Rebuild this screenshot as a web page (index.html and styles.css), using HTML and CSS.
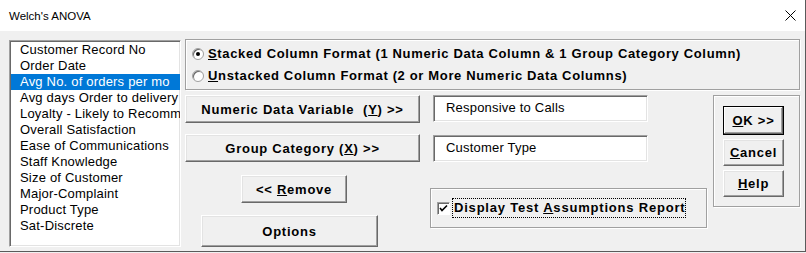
FILE: index.html
```html
<!DOCTYPE html>
<html lang="en">
<head>
    <meta charset="UTF-8">
    <title>Welch's ANOVA</title>
    <link rel="stylesheet" href="styles.css">
</head>
<body>
    <div class="window">
        <div class="titlebar">
            <span class="title">Welch's ANOVA</span>
            <svg class="close" width="11" height="11" viewBox="0 0 11 11">
                <path d="M0.5 0.5 L10.5 10.5 M10.5 0.5 L0.5 10.5" stroke="#000" stroke-width="1" fill="none"/>
            </svg>
        </div>

        <div class="client">
            <ul class="listbox">
                <li>Customer Record No</li>
                <li>Order Date</li>
                <li class="selected">Avg No. of orders per mo</li>
                <li>Avg days Order to delivery</li>
                <li>Loyalty - Likely to Recommend</li>
                <li>Overall Satisfaction</li>
                <li>Ease of Communications</li>
                <li>Staff Knowledge</li>
                <li>Size of Customer</li>
                <li>Major-Complaint</li>
                <li>Product Type</li>
                <li>Sat-Discrete</li>
            </ul>

            <div class="panel">
                <div class="frame format-frame">
                    <label class="radio-row">
                        <span class="radio checked"></span>
                        <span><u>S</u>tacked Column Format (1 Numeric Data Column &amp; 1 Group Category Column)</span>
                    </label>
                    <label class="radio-row">
                        <span class="radio"></span>
                        <span><u>U</u>nstacked Column Format (2 or More Numeric Data Columns)</span>
                    </label>
                </div>

                <div class="lower">
                    <div class="col-buttons">
                        <button class="btn btn-numeric">Numeric Data Variable&nbsp; (<u>Y</u>) &gt;&gt;</button>
                        <button class="btn btn-group">Group Category (<u>X</u>) &gt;&gt;</button>
                        <button class="btn btn-remove">&lt;&lt; <u>R</u>emove</button>
                        <button class="btn btn-options">Options</button>
                    </div>

                    <div class="col-fields">
                        <div class="textbox">Responsive to Calls</div>
                        <div class="textbox textbox-second">Customer Type</div>
                        <div class="frame check-frame">
                            <span class="checkbox">
                                <svg width="9" height="9" viewBox="0 0 9 9">
                                    <path d="M1 4 L3 6.5 L8 1.5" stroke="#000" stroke-width="1.6" fill="none"/>
                                </svg>
                            </span>
                            <span class="check-label">Display Test <u>A</u>ssumptions Report</span>
                        </div>
                    </div>

                    <div class="frame action-frame">
                        <button class="btn btn-action btn-default"><u>O</u>K &gt;&gt;</button>
                        <button class="btn btn-action"><u>C</u>ancel</button>
                        <button class="btn btn-action"><u>H</u>elp</button>
                    </div>
                </div>
            </div>
        </div>
    </div>
</body>
</html>
```

FILE: styles.css
```css
* {
    box-sizing: border-box;
}

body {
    margin: 0;
    background-color: #f0f0f0;
    font-family: 'Liberation Sans', Arial, sans-serif;
    font-size: 13px;
    color: #000;
}

.window {
    width: 806px;
    height: 252px;
    display: flex;
    flex-direction: column;
    border-right: 1px solid #5a5a5a;
    border-bottom: 1px solid #5a5a5a;
}

.titlebar {
    height: 31px;
    background: #fff;
    display: flex;
    align-items: center;
    justify-content: space-between;
    padding: 0 9px 0 9px;
}

.title {
    font-size: 11.5px;
    color: #000;
}

.client {
    flex: 1;
    display: flex;
    gap: 4px;
    padding: 8px 0 0 9px;
    background: #f0f0f0;
}

.listbox {
    list-style: none;
    margin: 1px 0 0 0;
    padding: 1px 0 0 1px;
    width: 172px;
    height: 207px;
    background: #fff;
    border: 1px solid;
    border-color: #a0a0a0 #fff #fff #a0a0a0;
    box-shadow: inset 1px 1px 0 #696969, inset -1px -1px 0 #e3e3e3;
    overflow: hidden;
    white-space: nowrap;
    letter-spacing: 0.2px;
}

.listbox li {
    height: 16px;
    line-height: 16px;
    padding-left: 9px;
}

.listbox li.selected {
    background: #0078d7;
    color: #fff;
}

.panel {
    width: 615px;
    display: flex;
    flex-direction: column;
}

.frame {
    border: 1px solid #a0a0a0;
    box-shadow: inset 1px 1px 0 #fff, 1px 1px 0 #fff;
}

.format-frame {
    height: 51px;
    padding: 4px 0 0 6px;
    display: flex;
    flex-direction: column;
    gap: 3px;
}

.radio-row {
    display: flex;
    align-items: center;
    gap: 4px;
    height: 19px;
    font-weight: bold;
    letter-spacing: 0.65px;
}

.radio {
    width: 12px;
    height: 12px;
    border-radius: 50%;
    background: #fff;
    border: 1px solid #a0a0a0;
    box-shadow: inset 1px 1px 0 #696969;
    position: relative;
}

.radio.checked::after {
    content: "";
    position: absolute;
    left: 3px;
    top: 3px;
    width: 4px;
    height: 4px;
    border-radius: 50%;
    background: #000;
}

.lower {
    display: flex;
    margin-top: 5px;
}

.col-buttons {
    width: 235px;
    display: flex;
    flex-direction: column;
    align-items: flex-start;
}

.btn {
    font-family: 'Liberation Sans', Arial, sans-serif;
    font-size: 13px;
    font-weight: bold;
    letter-spacing: 0.75px;
    color: #000;
    background: #f0f0f0;
    border: 1px solid;
    border-color: #fff #696969 #696969 #fff;
    box-shadow: inset -1px -1px 0 #a0a0a0, inset 1px 1px 0 #e3e3e3;
    padding: 0;
    border-radius: 0;
}

.btn-numeric {
    width: 235px;
    height: 28px;
}

.btn-group {
    width: 235px;
    height: 28px;
    margin-top: 11px;
}

.btn-remove {
    width: 106px;
    height: 28px;
    margin-top: 13px;
    margin-left: 56px;
}

.btn-options {
    width: 177px;
    height: 32px;
    margin-top: 12px;
    margin-left: 16px;
}

.col-fields {
    width: 277px;
    margin-left: 10px;
    display: flex;
    flex-direction: column;
    align-items: flex-start;
}

.textbox {
    width: 215px;
    height: 27px;
    margin-left: 3px;
    background: #fff;
    border: 1px solid;
    border-color: #a0a0a0 #fff #fff #a0a0a0;
    box-shadow: inset 1px 1px 0 #696969, inset -1px -1px 0 #e3e3e3;
    padding: 0 0 0 12px;
    line-height: 24px;
    white-space: nowrap;
    letter-spacing: 0.2px;
}

.textbox-second {
    margin-top: 13px;
}

.check-frame {
    width: 277px;
    height: 40px;
    margin-top: 26px;
    display: flex;
    align-items: center;
    padding-left: 6px;
    gap: 2px;
}

.checkbox {
    width: 13px;
    height: 13px;
    background: #fff;
    border: 1px solid;
    border-color: #a0a0a0 #fff #fff #a0a0a0;
    box-shadow: inset 1px 1px 0 #696969;
    display: flex;
    align-items: center;
    justify-content: center;
    margin-top: 1px;
}

.check-label {
    font-weight: bold;
    letter-spacing: 0.8px;
    border: 1px dotted #000;
    padding: 1px 0 2px 1px;
    white-space: nowrap;
}

.action-frame {
    width: 87px;
    height: 112px;
    margin-left: 6px;
    padding: 10px 0 0 9px;
    display: flex;
    flex-direction: column;
    gap: 4px;
}

.btn-action {
    width: 61px;
    height: 27px;
}

.btn-default {
    height: 29px;
    outline: 1px solid #000;
    outline-offset: -1px;
    border-color: #fff #696969 #696969 #fff;
    box-shadow: inset -1px -1px 0 #696969, inset 1px 1px 0 #fff, inset -2px -2px 0 #a0a0a0;
}
```
